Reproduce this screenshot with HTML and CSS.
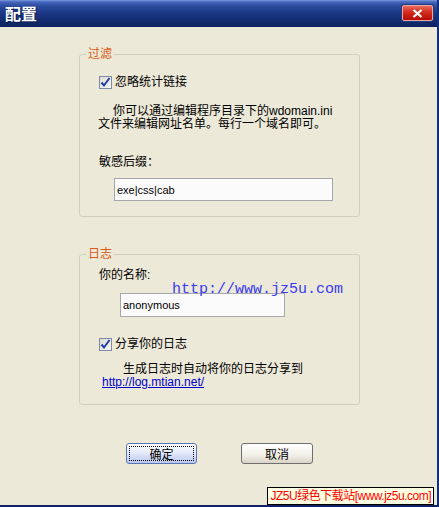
FILE: index.html
```html
<!DOCTYPE html>
<html lang="zh-CN">
<head>
    <meta charset="UTF-8">
    <meta name="viewport" content="width=device-width, initial-scale=1.0">
    <title>配置</title>
    <link rel="stylesheet" href="styles.css">
</head>
<body>

    <div class="window">
        <div class="titlebar">
            <span class="title">配置</span>
            <span class="close-btn">
                <svg width="11" height="9" viewBox="0 0 11 9">
                    <path d="M1.5 1 L9.5 8 M9.5 1 L1.5 8" stroke="#fff" stroke-width="2.2" fill="none"/>
                </svg>
            </span>
        </div>

        <div class="client">
            <div class="group group-filter">
                <span class="group-title">过滤</span>

                <div class="check-row">
                    <span class="check">
                        <svg width="11" height="11" viewBox="0 0 11 11">
                            <path d="M1.5 5.5 L4 8.5 L9.5 1" stroke="#1f3fa6" stroke-width="2" fill="none"/>
                        </svg>
                    </span>
                    <span>忽略统计链接</span>
                </div>

                <p class="hint">你可以通过编辑程序目录下的wdomain.ini<br>文件来编辑网址名单。每行一个域名即可。</p>

                <div class="field-label">敏感后缀：</div>
                <input class="textbox tb-suffix" type="text" value="exe|css|cab">
            </div>

            <div class="group group-log">
                <span class="group-title">日志</span>

                <div class="field-label">你的名称:</div>
                <input class="textbox tb-name" type="text" value="anonymous">
                <span class="watermark">http://www.jz5u.com</span>

                <div class="check-row check-share">
                    <span class="check">
                        <svg width="11" height="11" viewBox="0 0 11 11">
                            <path d="M1.5 5.5 L4 8.5 L9.5 1" stroke="#1f3fa6" stroke-width="2" fill="none"/>
                        </svg>
                    </span>
                    <span>分享你的日志</span>
                </div>

                <p class="share-note">生成日志时自动将你的日志分享到</p>
                <a class="share-link" href="#">http://log.mtian.net/</a>
            </div>

            <div class="buttons">
                <button class="btn btn-default" type="button"><span class="focus-rect">确定</span></button>
                <button class="btn" type="button">取消</button>
            </div>
        </div>

        <div class="badge">JZ5U绿色下载站[www.jz5u.com]</div>
    </div>

</body>
</html>
```

FILE: styles.css
```css
body {
    margin: 0;
    font-family: "Liberation Sans", "Noto Sans CJK SC", sans-serif;
    font-size: 12px;
    color: #000;
}
.window {
    position: relative;
    width: 439px;
    height: 507px;
    box-sizing: border-box;
    background-color: #ece9d8;
    border-right: 2px solid #14307a;
    border-bottom: 2px solid #0c2464;
    overflow: hidden;
}
.titlebar {
    height: 27px;
    display: flex;
    align-items: center;
    justify-content: space-between;
    padding: 0 4px 0 5px;
    background: linear-gradient(#7c98e0 0, #4466bb 2px, #2c4c9e 6px, #1d3a88 12px, #132c70 20px, #0d235e 27px);
}
.title {
    color: #fff;
    font-family: "Noto Sans CJK SC", sans-serif;
    font-size: 16px;
    font-weight: bold;
    line-height: 16px;
    text-shadow: 1px 1px 0 #0a1a4c;
    margin-top: -1px;
}
.close-btn {
    display: flex;
    align-items: center;
    justify-content: center;
    width: 29px;
    height: 14px;
    margin-top: -1px;
    border: 1px solid #e9a9a0;
    border-radius: 2px;
    background: linear-gradient(#e86a5c, #d32a1c 45%, #b60c04 100%);
    box-shadow: 0 0 0 1px #223b80;
}
.client {
    padding: 27px 0 0 79px;
}
.group {
    position: relative;
    width: 281px;
    box-sizing: border-box;
    border: 1px solid #d0d0bf;
    border-radius: 3px;
    padding: 0 0 0 18px;
}
.group-filter {
    padding-top: 21px;
    padding-bottom: 15px;
}
.group-log {
    margin-top: 37px;
    padding-top: 14px;
    padding-bottom: 15px;
}
.group-title {
    position: absolute;
    top: -7px;
    left: 6px;
    padding: 0 2px;
    line-height: 13px;
    color: #d85b14;
    background-color: #ece9d8;
}
.check-row {
    display: flex;
    align-items: center;
    height: 13px;
    line-height: 13px;
    margin-left: 1px;
}
.check {
    display: flex;
    align-items: center;
    justify-content: center;
    width: 13px;
    height: 13px;
    box-sizing: border-box;
    margin-right: 3px;
    border: 1px solid #7d8ca4;
    background: linear-gradient(135deg, #dcdcd6, #f7f7f4);
}
.hint {
    margin: 16px 0 0 0;
    line-height: 13px;
    text-indent: 15px;
}
.field-label {
    line-height: 13px;
    margin-left: 1px;
}
.group-filter .field-label {
    margin-top: 25px;
}
.textbox {
    display: block;
    height: 23px;
    box-sizing: border-box;
    padding: 0 2px;
    border: 1px solid #a7a6aa;
    background-color: #fbfbfb;
    font-family: "Liberation Sans", sans-serif;
    font-size: 11px;
    color: #000;
    outline: none;
}
.tb-suffix {
    margin: 9px 0 0 16px;
    width: 219px;
}
.tb-name {
    margin: 11px 0 0 22px;
    width: 165px;
    height: 24px;
}
.watermark {
    position: absolute;
    left: 92px;
    top: 27px;
    font-family: "Liberation Mono", monospace;
    font-size: 15px;
    line-height: 15px;
    color: #3a3af2;
}
.check-share {
    margin-top: 21px;
}
.share-note {
    margin: 12px 0 0 25px;
    line-height: 13px;
}
.share-link {
    display: block;
    margin-left: 4px;
    line-height: 13px;
    color: #0000cc;
}
.buttons {
    display: flex;
    gap: 44px;
    margin: 38px 0 0 47px;
}
.btn {
    width: 72px;
    height: 21px;
    padding: 0;
    border: 1px solid #6f6f6f;
    border-radius: 3px;
    background: linear-gradient(#ffffff, #f1efe7 60%, #d8d4c6);
    font-family: "Noto Sans CJK SC", sans-serif;
    font-size: 12px;
    line-height: 13px;
    color: #000;
}
.btn-default {
    width: 71px;
    border-color: #5b74b8;
    background: linear-gradient(#ffffff, #e2e8fa 50%, #b9c8ef);
    padding: 2px;
}
.focus-rect {
    display: flex;
    align-items: center;
    justify-content: center;
    height: 100%;
    box-sizing: border-box;
    border: 1px dotted #000;
}
.badge {
    position: absolute;
    right: 3px;
    bottom: 0;
    height: 18px;
    padding: 0 2px;
    box-sizing: border-box;
    border: 1px solid #000;
    background-color: #ffffe1;
    color: #ff0000;
    font-size: 12px;
    line-height: 16px;
    letter-spacing: -0.5px;
    white-space: nowrap;
}
```
